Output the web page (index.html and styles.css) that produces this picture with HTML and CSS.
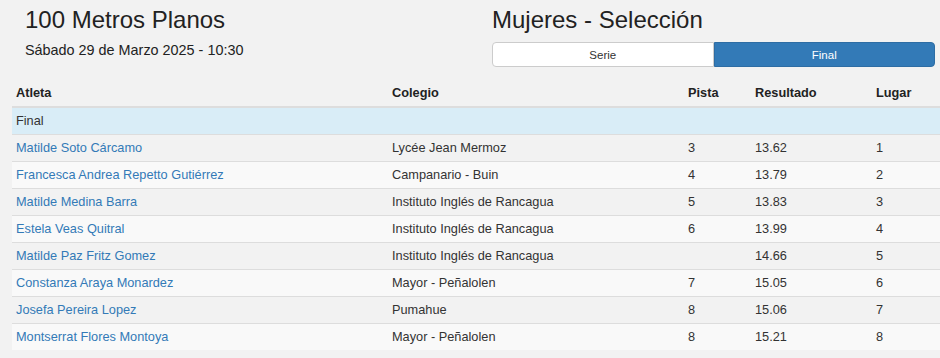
FILE: index.html
```html
<!DOCTYPE html>
<html lang="es">
<head>
<meta charset="utf-8">
<title>100 Metros Planos</title>
<link rel="stylesheet" href="styles.css">
</head>
<body>
<div class="page">
  <header class="top">
    <div class="event">
      <h1 class="title">100 Metros Planos</h1>
      <p class="date">Sábado 29 de Marzo 2025 - 10:30</p>
    </div>
    <div class="category">
      <h1 class="title">Mujeres - Selección</h1>
      <div class="btn-group">
        <a class="btn">Serie</a>
        <a class="btn active">Final</a>
      </div>
    </div>
  </header>
  <table class="results">
    <colgroup>
      <col class="c-atleta"><col class="c-colegio"><col class="c-pista"><col class="c-res"><col>
    </colgroup>
    <thead>
      <tr><th>Atleta</th><th>Colegio</th><th>Pista</th><th>Resultado</th><th>Lugar</th></tr>
    </thead>
    <tbody>
      <tr class="info"><td colspan="5">Final</td></tr>
      <tr><td><a>Matilde Soto Cárcamo</a></td><td>Lycée Jean Mermoz</td><td>3</td><td>13.62</td><td>1</td></tr>
      <tr class="odd"><td><a>Francesca Andrea Repetto Gutiérrez</a></td><td>Campanario - Buin</td><td>4</td><td>13.79</td><td>2</td></tr>
      <tr><td><a>Matilde Medina Barra</a></td><td>Instituto Inglés de Rancagua</td><td>5</td><td>13.83</td><td>3</td></tr>
      <tr class="odd"><td><a>Estela Veas Quitral</a></td><td>Instituto Inglés de Rancagua</td><td>6</td><td>13.99</td><td>4</td></tr>
      <tr><td><a>Matilde Paz Fritz Gomez</a></td><td>Instituto Inglés de Rancagua</td><td></td><td>14.66</td><td>5</td></tr>
      <tr class="odd"><td><a>Constanza Araya Monardez</a></td><td>Mayor - Peñalolen</td><td>7</td><td>15.05</td><td>6</td></tr>
      <tr><td><a>Josefa Pereira Lopez</a></td><td>Pumahue</td><td>8</td><td>15.06</td><td>7</td></tr>
      <tr class="odd"><td><a>Montserrat Flores Montoya</a></td><td>Mayor - Peñalolen</td><td>8</td><td>15.21</td><td>8</td></tr>
    </tbody>
  </table>
</div>
</body>
</html>
```

FILE: styles.css
```css
html, body {
  margin: 0;
  padding: 0;
  background: #f2f2f2;
  overflow: hidden;
}
body {
  font-family: "Liberation Sans", Arial, sans-serif;
  color: #333;
  font-size: 12.75px;
  line-height: 16px;
}
.page {
  padding-top: 6px;
}
.top {
  display: flex;
  padding-left: 25px;
}
.event {
  width: 467px;
}
.category {
  width: 443px;
}
.title {
  margin: 0;
  font-size: 24px;
  line-height: 28px;
  font-weight: normal;
  color: #222;
}
.date {
  margin: 7px 0 0 0;
  font-size: 14.4px;
  line-height: 18px;
  color: #222;
}
.btn-group {
  display: flex;
  margin-top: 8px;
  height: 25px;
}
.btn {
  flex: 1;
  display: flex;
  align-items: center;
  justify-content: center;
  font-size: 11.5px;
  box-sizing: border-box;
  border: 1px solid #ccc;
  background: #fff;
  color: #333;
}
.btn:first-child {
  border-radius: 4px 0 0 4px;
}
.btn.active {
  background: #337ab7;
  border-color: #2e6da4;
  color: #fff;
  border-radius: 0 4px 4px 0;
}
.results {
  margin: 13px 0 0 12px;
  width: 940px;
  border-collapse: collapse;
  table-layout: fixed;
}
.c-atleta { width: 376px; }
.c-colegio { width: 296px; }
.c-pista { width: 67px; }
.c-res { width: 121px; }
.results th {
  text-align: left;
  font-weight: bold;
  padding: 5px 4px;
  border-bottom: 2px solid #ddd;
  color: #222;
}
.results td {
  padding: 5px 4px;
  border-top: 1px solid #ddd;
  white-space: nowrap;
}
.results tr.odd td {
  background: #f9f9f9;
}
.results tr.info td {
  background: #d9edf7;
}
.results a {
  color: #337ab7;
  text-decoration: none;
}
```
